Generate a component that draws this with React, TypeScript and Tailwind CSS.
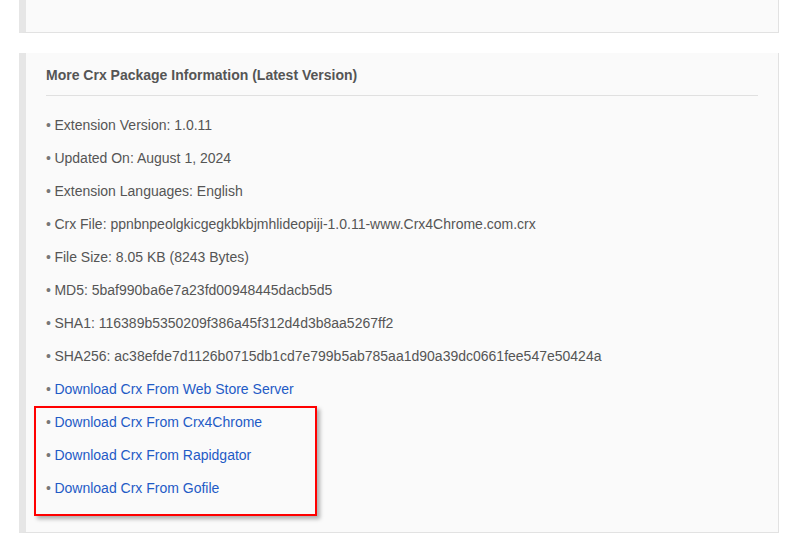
import React from "react";

const info = [
  "Extension Version: 1.0.11",
  "Updated On: August 1, 2024",
  "Extension Languages: English",
  "Crx File: ppnbnpeolgkicgegkbkbjmhlideopiji-1.0.11-www.Crx4Chrome.com.crx",
  "File Size: 8.05 KB (8243 Bytes)",
  "MD5: 5baf990ba6e7a23fd00948445dacb5d5",
  "SHA1: 116389b5350209f386a45f312d4d3b8aa5267ff2",
  "SHA256: ac38efde7d1126b0715db1cd7e799b5ab785aa1d90a39dc0661fee547e50424a",
];

const links = [
  "Download Crx From Web Store Server",
  "Download Crx From Crx4Chrome",
  "Download Crx From Rapidgator",
  "Download Crx From Gofile",
];

export default function App() {
  return (
    <div className="min-h-[546px] bg-white font-['Liberation_Sans',Arial,sans-serif] text-[14px]">
      <div className="ml-[19px] w-[760px]">
        <div className="h-[33px] border-l-[7px] border-r border-b border-l-[#e6e6e6] border-r-[#e2e2e2] border-b-[#e2e2e2] bg-[#fafafa]" />

        <div className="relative mt-[20px] h-[480px] border-l-[7px] border-r border-b border-l-[#e6e6e6] border-r-[#e2e2e2] border-b-[#e2e2e2] bg-[#fafafa] pl-[20px] pr-[20px] pt-[12px]">
          <h3 className="border-b border-[#e0e0e0] pb-[10px] text-[14px] font-bold leading-[20px] text-[#555]">
            More Crx Package Information (Latest Version)
          </h3>
          <ul className="pt-[13px]">
            {info.map((t) => (
              <li key={t} className="flex h-[33px] items-center text-[#555]">
                <span className="mr-[3.5px] text-[#777]">•</span>
                {t}
              </li>
            ))}
            {links.map((t) => (
              <li key={t} className="flex h-[33px] items-center">
                <span className="mr-[3.5px] text-[#777]">•</span>
                <a href="#" className="text-[#1f5bc6]">{t}</a>
              </li>
            ))}
          </ul>

          <div className="absolute left-[8px] top-[353px] h-[110px] w-[283px] border-2 border-[#ff0000] shadow-[3px_3px_4px_rgba(0,0,0,0.3)]" />
        </div>
      </div>
    </div>
  );
}
